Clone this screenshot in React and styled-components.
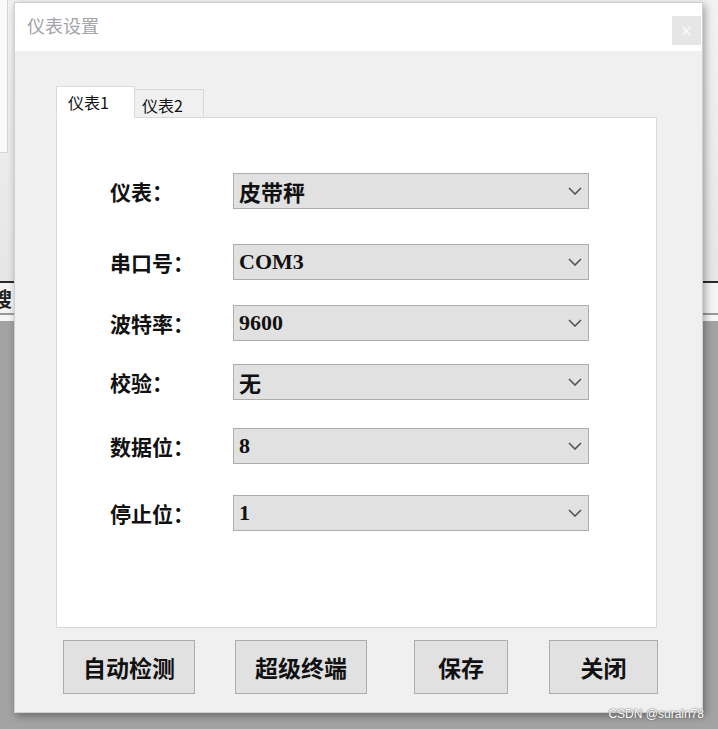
import styled, { createGlobalStyle } from "styled-components";

const GlobalStyle = createGlobalStyle`
  html, body {
    margin: 0;
    padding: 0;
  }
  body {
    font-family: "Liberation Serif", "Noto Sans CJK SC", serif;
    background: #a3a3a3;
  }
`;

const fields = [
  { label: "仪表：", value: "皮带秤", top: 55 },
  { label: "串口号：", value: "COM3", top: 35 },
  { label: "波特率：", value: "9600", top: 25 },
  { label: "校验：", value: "无", top: 23 },
  { label: "数据位：", value: "8", top: 28 },
  { label: "停止位：", value: "1", top: 31 },
];

const buttons = [
  { text: "自动检测", width: 132, gap: 7 },
  { text: "超级终端", width: 132, gap: 40 },
  { text: "保存", width: 94, gap: 47 },
  { text: "关闭", width: 109, gap: 41 },
];

const Chevron = () => (
  <svg width="14" height="8" viewBox="0 0 14 8">
    <path d="M1 1 L7 7 L13 1" fill="none" stroke="#555" strokeWidth="1.6" />
  </svg>
);

const App = () => {
  return (
    <>
      <GlobalStyle />
      <Screen>
        <Backdrop>
          <BackTop>
            <BackPane />
          </BackTop>
          <BackToolbar>
            <BackToolText>搜</BackToolText>
          </BackToolbar>
          <BackStrip />
          <BackGrey />
        </Backdrop>

        <Dialog>
          <TitleBar>
            <Title>仪表设置</Title>
            <CloseButton>×</CloseButton>
          </TitleBar>
          <Body>
            <Tabs>
              <Tab active>仪表1</Tab>
              <Tab>仪表2</Tab>
            </Tabs>
            <Panel>
              {fields.map((f) => (
                <FieldRow key={f.label} top={f.top}>
                  <Label>{f.label}</Label>
                  <Select>
                    <span>{f.value}</span>
                    <Chevron />
                  </Select>
                </FieldRow>
              ))}
            </Panel>
            <ButtonRow>
              {buttons.map((b) => (
                <Button key={b.text} width={b.width} gap={b.gap}>
                  {b.text}
                </Button>
              ))}
            </ButtonRow>
          </Body>
        </Dialog>
        <Watermark>CSDN @surain78</Watermark>
      </Screen>
    </>
  );
};

const Screen = styled.div`
  position: relative;
  width: 718px;
  height: 729px;
  overflow: hidden;
`;

const Backdrop = styled.div`
  display: flex;
  flex-direction: column;
  height: 100%;
`;

const BackTop = styled.div`
  height: 281px;
  background: linear-gradient(#f2f2f2, #e6e6e6);
`;

const BackPane = styled.div`
  width: 7px;
  height: 152px;
  background: #fafafa;
  border-right: 1px solid #d6d6d6;
  border-bottom: 1px solid #d6d6d6;
`;

const BackToolbar = styled.div`
  height: 30px;
  border-top: 2px solid #2a2a2a;
  border-bottom: 2px solid #9a9a9a;
  background: #f4f4f4;
  display: flex;
  align-items: center;
  overflow: hidden;
`;

const BackToolText = styled.span`
  margin-left: -8px;
  font-family: "Noto Sans CJK SC", sans-serif;
  font-weight: 700;
  font-size: 20px;
  color: #222;
`;

const BackStrip = styled.div`
  height: 6px;
  background: #f7f7f7;
`;

const BackGrey = styled.div`
  flex: 1;
  background: #a3a3a3;
`;

const Dialog = styled.div`
  position: absolute;
  left: 14px;
  top: 2px;
  width: 689px;
  height: 711px;
  background: #f0f0f0;
  border: 1px solid #d0d0d0;
  box-sizing: border-box;
  box-shadow: 2px 3px 8px rgba(0, 0, 0, 0.35);
  display: flex;
  flex-direction: column;
`;

const TitleBar = styled.div`
  height: 48px;
  background: #ffffff;
  display: flex;
  align-items: center;
  justify-content: space-between;
  padding: 0 1px 0 12px;
`;

const Title = styled.span`
  font-family: "Noto Sans CJK SC", sans-serif;
  font-size: 18px;
  color: #a3a3a8;
  margin-top: -4px;
`;

const CloseButton = styled.div`
  width: 29px;
  height: 29px;
  margin-top: 6px;
  background: #e6e6e6;
  color: #fafafa;
  font-family: "DejaVu Sans", sans-serif;
  font-size: 16px;
  display: flex;
  align-items: center;
  justify-content: center;
`;

const Body = styled.div`
  flex: 1;
  padding: 35px 0 0 41px;
  display: flex;
  flex-direction: column;
`;

const Tabs = styled.div`
  display: flex;
  align-items: flex-end;
  height: 32px;
  position: relative;
  z-index: 1;
  margin-bottom: -1px;
`;

const Tab = styled.div`
  box-sizing: border-box;
  height: ${(p) => (p.active ? "32px" : "29px")};
  width: ${(p) => (p.active ? "79px" : "69px")};
  padding-left: ${(p) => (p.active ? "11px" : "7px")};
  background: ${(p) => (p.active ? "#ffffff" : "#f0f0f0")};
  border: 1px solid #d9d9d9;
  border-bottom: ${(p) => (p.active ? "1px solid #ffffff" : "1px solid #d9d9d9")};
  ${(p) => (p.active ? "" : "border-left: none;")}
  font-family: "Noto Sans CJK SC", sans-serif;
  font-size: 16px;
  line-height: 30px;
  color: #111;
`;

const Panel = styled.div`
  box-sizing: border-box;
  width: 601px;
  height: 511px;
  background: #ffffff;
  border: 1px solid #d9d9d9;
  padding-left: 53px;
  display: flex;
  flex-direction: column;
`;

const FieldRow = styled.div`
  display: flex;
  align-items: center;
  height: 36px;
  margin-top: ${(p) => p.top}px;
`;

const Label = styled.div`
  width: 123px;
  font-family: "Noto Sans CJK SC", sans-serif;
  font-weight: 700;
  font-size: 21px;
  color: #111;
`;

const Select = styled.div`
  box-sizing: border-box;
  width: 356px;
  height: 36px;
  background: #e1e1e1;
  border: 1px solid #adadad;
  display: flex;
  align-items: center;
  justify-content: space-between;
  padding: 0 6px 0 5px;
  font-family: "Liberation Serif", "Noto Sans CJK SC", serif;
  font-weight: 700;
  font-size: 22px;
  color: #111;
`;

const ButtonRow = styled.div`
  display: flex;
  padding-top: 12px;
`;

const Button = styled.div`
  box-sizing: border-box;
  width: ${(p) => p.width}px;
  height: 54px;
  margin-left: ${(p) => p.gap}px;
  background: #e1e1e1;
  border: 1px solid #adadad;
  display: flex;
  align-items: center;
  justify-content: center;
  font-family: "Noto Sans CJK SC", sans-serif;
  font-weight: 700;
  font-size: 23px;
  color: #111;
`;

const Watermark = styled.div`
  position: absolute;
  right: 14px;
  bottom: 8px;
  font-family: "Liberation Sans", sans-serif;
  font-size: 12px;
  color: #ffffff;
  text-shadow: 0 0 2px #777, 0 0 1px #555;
`;

export default App;
